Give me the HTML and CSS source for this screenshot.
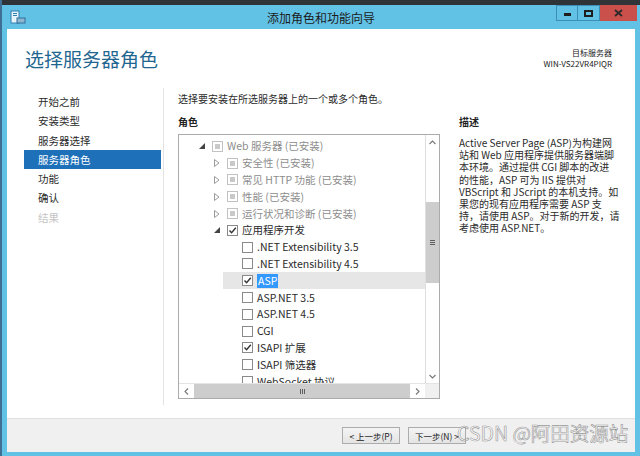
FILE: index.html
```html
<!DOCTYPE html>
<html lang="zh-CN">
<head>
<meta charset="utf-8">
<title>添加角色和功能向导</title>
<link rel="stylesheet" href="styles.css">
</head>
<body>
<div class="desk">
  <div class="window">
    <div class="titlebar">
      <svg class="appicon" width="16" height="16" viewBox="0 0 16 16">
        <rect x="1" y="2" width="8" height="12" fill="#e8f4fb" stroke="#2f7fb0" stroke-width="1"/>
        <rect x="3" y="4" width="4" height="1" fill="#2f7fb0"/>
        <rect x="3" y="6" width="4" height="1" fill="#2f7fb0"/>
        <rect x="7" y="9" width="8" height="5" fill="#8fb6d0" stroke="#2f6f99" stroke-width="1"/>
      </svg>
      <div class="wtitle">添加角色和功能向导</div>
      <div class="capbtns">
        <div class="cb cb-min"><span class="minbar"></span></div>
        <div class="cb cb-max"><span class="maxbox"></span></div>
        <div class="cb cb-close">
          <svg width="9" height="8" viewBox="0 0 9 8"><path d="M1 1 L8 7 M8 1 L1 7" stroke="#2a2a2a" stroke-width="1.8"/></svg>
        </div>
      </div>
    </div>
    <div class="client">
      <header class="head">
        <h1 class="ptitle">选择服务器角色</h1>
        <div class="target">
          <div>目标服务器</div>
          <div>WIN-VS22VR4PIQR</div>
        </div>
      </header>
      <div class="main">
        <nav class="nav">
          <div class="navitem">开始之前</div>
          <div class="navitem">安装类型</div>
          <div class="navitem">服务器选择</div>
          <div class="navitem active">服务器角色</div>
          <div class="navitem">功能</div>
          <div class="navitem">确认</div>
          <div class="navitem disabled">结果</div>
        </nav>
        <section class="content">
          <div class="instr">选择要安装在所选服务器上的一个或多个角色。</div>
          <div class="cols">
            <div class="rolescol">
              <div class="label">角色</div>
              <div class="treebox">
                <div class="treearea">
                  <div class="rows">
                    <div class="row l0 gray"><span class="exp"><svg width="6" height="6" viewBox="0 0 6 6"><path d="M6 0 L6 6 L0 6 Z" fill="#444"/></svg></span><span class="chk ind"></span><span class="txt">Web 服务器 (已安装)</span></div>
                    <div class="row l1 gray"><span class="exp"><svg width="6" height="8" viewBox="0 0 6 8"><path d="M0.5 0.5 L5 4 L0.5 7.5 Z" fill="none" stroke="#9a9a9a"/></svg></span><span class="chk ind"></span><span class="txt">安全性 (已安装)</span></div>
                    <div class="row l1 gray"><span class="exp"><svg width="6" height="8" viewBox="0 0 6 8"><path d="M0.5 0.5 L5 4 L0.5 7.5 Z" fill="none" stroke="#9a9a9a"/></svg></span><span class="chk ind"></span><span class="txt">常见 HTTP 功能 (已安装)</span></div>
                    <div class="row l1 gray"><span class="exp"><svg width="6" height="8" viewBox="0 0 6 8"><path d="M0.5 0.5 L5 4 L0.5 7.5 Z" fill="none" stroke="#9a9a9a"/></svg></span><span class="chk ind"></span><span class="txt">性能 (已安装)</span></div>
                    <div class="row l1 gray"><span class="exp"><svg width="6" height="8" viewBox="0 0 6 8"><path d="M0.5 0.5 L5 4 L0.5 7.5 Z" fill="none" stroke="#9a9a9a"/></svg></span><span class="chk ind"></span><span class="txt">运行状况和诊断 (已安装)</span></div>
                    <div class="row l1"><span class="exp"><svg width="6" height="6" viewBox="0 0 6 6"><path d="M6 0 L6 6 L0 6 Z" fill="#444"/></svg></span><span class="chk on"><svg width="9" height="9" viewBox="0 0 9 9"><path d="M1.5 4.5 L3.6 6.8 L7.8 1.8" fill="none" stroke="#333" stroke-width="1.4"/></svg></span><span class="txt">应用程序开发</span></div>
                    <div class="row l2"><span class="exp"></span><span class="chk"></span><span class="txt">.NET Extensibility 3.5</span></div>
                    <div class="row l2"><span class="exp"></span><span class="chk"></span><span class="txt">.NET Extensibility 4.5</span></div>
                    <div class="row l2 sel"><span class="exp"></span><span class="chk on"><svg width="9" height="9" viewBox="0 0 9 9"><path d="M1.5 4.5 L3.6 6.8 L7.8 1.8" fill="none" stroke="#333" stroke-width="1.4"/></svg></span><span class="txt hl">ASP</span></div>
                    <div class="row l2"><span class="exp"></span><span class="chk"></span><span class="txt">ASP.NET 3.5</span></div>
                    <div class="row l2"><span class="exp"></span><span class="chk"></span><span class="txt">ASP.NET 4.5</span></div>
                    <div class="row l2"><span class="exp"></span><span class="chk"></span><span class="txt">CGI</span></div>
                    <div class="row l2"><span class="exp"></span><span class="chk on"><svg width="9" height="9" viewBox="0 0 9 9"><path d="M1.5 4.5 L3.6 6.8 L7.8 1.8" fill="none" stroke="#333" stroke-width="1.4"/></svg></span><span class="txt">ISAPI 扩展</span></div>
                    <div class="row l2"><span class="exp"></span><span class="chk"></span><span class="txt">ISAPI 筛选器</span></div>
                    <div class="row l2"><span class="exp"></span><span class="chk"></span><span class="txt">WebSocket 协议</span></div>
                  </div>
                  <div class="vscroll">
                    <div class="sbtn"><svg width="7" height="5" viewBox="0 0 7 5"><path d="M0.5 4 L3.5 1 L6.5 4" fill="none" stroke="#777" stroke-width="1.1"/></svg></div>
                    <div class="vtrack">
                      <div class="vthumb"><span class="grip"></span><span class="grip"></span><span class="grip"></span></div>
                    </div>
                    <div class="sbtn"><svg width="7" height="5" viewBox="0 0 7 5"><path d="M0.5 1 L3.5 4 L6.5 1" fill="none" stroke="#777" stroke-width="1.1"/></svg></div>
                  </div>
                </div>
                <div class="hscroll">
                  <div class="hbtn"><svg width="5" height="7" viewBox="0 0 5 7"><path d="M4 0.5 L1 3.5 L4 6.5" fill="none" stroke="#777" stroke-width="1.1"/></svg></div>
                  <div class="hthumb"><span class="hgrip"></span><span class="hgrip"></span><span class="hgrip"></span></div>
                  <div class="hbtn"><svg width="5" height="7" viewBox="0 0 5 7"><path d="M1 0.5 L4 3.5 L1 6.5" fill="none" stroke="#777" stroke-width="1.1"/></svg></div>
                  <div class="corner"></div>
                </div>
              </div>
            </div>
            <div class="desccol">
              <div class="label">描述</div>
              <div class="desc">
                <div class="dl">Active Server Page (ASP)为构建网</div>
                <div class="dl">站和 Web 应用程序提供服务器端脚</div>
                <div class="dl">本环境。通过提供 CGI 脚本的改进</div>
                <div class="dl">的性能，ASP 可为 IIS 提供对</div>
                <div class="dl">VBScript 和 JScript 的本机支持。如</div>
                <div class="dl">果您的现有应用程序需要 ASP 支</div>
                <div class="dl">持，请使用 ASP。对于新的开发，请</div>
                <div class="dl">考虑使用 ASP.NET。</div>
              </div>
            </div>
          </div>
        </section>
      </div>
      <footer class="foot">
        <button class="btn">&lt; 上一步(P)</button>
        <button class="btn">下一步(N) &gt;</button>
        <div class="watermark">CSDN @阿田资源站</div>
      </footer>
    </div>
  </div>
</div>
</body>
</html>
```
FILE: styles.css
```css
* { box-sizing: border-box; }
html, body { margin: 0; padding: 0; }
body {
  width: 640px;
  height: 456px;
  overflow: hidden;
  background: #2f3438;
  font-family: "Noto Sans CJK SC", "Noto Sans", sans-serif;
  color: #1e1e1e;
}
.desk {
  padding: 5px 0 0 2px;
  height: 456px;
  background: linear-gradient(to right, #3f6f95 0, #3f6f95 2px, #2f3438 2px);
}
.window {
  width: 638px;
  height: 451px;
  background: #62c2e6;
  padding: 0 5px 4px 5px;
  display: flex;
  flex-direction: column;
}
.titlebar {
  height: 24px;
  position: relative;
  display: flex;
  align-items: center;
  justify-content: center;
}
.appicon { position: absolute; left: 3px; top: 4px; }
.wtitle {
  font-size: 12px;
  color: #1b1b1b;
  margin-top: 1px;
}
.capbtns {
  position: absolute;
  right: -2px;
  top: 0;
  display: flex;
}
.cb {
  height: 16px;
  display: flex;
  align-items: center;
  justify-content: center;
}
.cb-min { width: 21px; border: 1px solid #3d8fb6; border-right: none; background: #62c2e6; }
.cb-max { width: 23px; border: 1px solid #3d8fb6; background: #62c2e6; }
.cb-close { width: 37px; background: #c9504b; }
.minbar { width: 7px; height: 3px; background: #1d1d1d; margin-top: 3px; }
.maxbox { width: 9px; height: 7px; border: 2px solid #1d1d1d; }

.client {
  flex: 1;
  background: #ffffff;
  display: flex;
  flex-direction: column;
  position: relative;
}
.head {
  height: 59px;
  display: flex;
  justify-content: space-between;
  padding: 0 23px 0 18px;
}
.ptitle {
  margin: 16px 0 0 0;
  font-size: 19px;
  font-weight: normal;
  color: #1f6690;
  line-height: 28px;
}
.target {
  margin-top: 18px;
  text-align: right;
  font-size: 8px;
  line-height: 11px;
  color: #222;
}
.main {
  flex: 1;
  display: flex;
  min-height: 0;
}
.nav {
  width: 157px;
  padding: 4px 0 0 17px;
  border-right: 1px solid #e3e3e3;
  margin-bottom: 13px;
}
.navitem {
  height: 19.3px;
  line-height: 19.3px;
  font-size: 10.5px;
  padding-left: 14px;
  color: #2b2b2b;
  width: 137px;
}
.navitem.active { background: #1e70b9; color: #fff; }
.navitem.disabled { color: #c4c4c4; }
.content {
  flex: 1;
  padding: 4px 0 0 14px;
}
.instr {
  font-size: 10px;
  line-height: 14px;
  color: #2b2b2b;
}
.cols {
  display: flex;
  margin-top: 3px;
}
.rolescol { width: 262px; }
.desccol { padding-left: 19px; }
.label {
  font-size: 10px;
  font-weight: bold;
  line-height: 14px;
  height: 19px;
  margin-top: 6px;
  color: #222;
}
.treebox {
  width: 262px;
  height: 265px;
  border: 1px solid #ababab;
  display: flex;
  flex-direction: column;
}
.treearea {
  flex: 1;
  display: flex;
  min-height: 0;
}
.rows {
  flex: 1;
  padding-top: 3px;
  overflow: hidden;
}
.row {
  height: 16.8px;
  display: flex;
  align-items: center;
  font-size: 10.5px;
  color: #2b2b2b;
  white-space: nowrap;
}
.row.l0 { padding-left: 13px; }
.row.l1 { padding-left: 28px; }
.row.l2 { padding-left: 46px; }
.row.l0 .exp, .row.l1 .exp { width: 20px; }
.row.gray { color: #8d8d8d; }
.row.sel { background: #e6e6e6; margin-left: 44px; padding-left: 2px; }
.exp {
  width: 17px;
  display: flex;
  align-items: center;
  justify-content: center;
}
.chk {
  width: 11px;
  height: 11px;
  border: 1px solid #8a8a8a;
  background: #fff;
  margin-right: 4px;
  display: flex;
  align-items: center;
  justify-content: center;
}
.chk.ind { border-color: #c2c2c2; }
.chk.ind::after {
  content: "";
  width: 5px;
  height: 5px;
  background: #c9c9c9;
}
.txt { line-height: 14px; }
.txt.hl { background: #3399ff; color: #fff; padding: 0 1px; }

.vscroll {
  width: 14px;
  border-left: 1px solid #dedede;
  display: flex;
  flex-direction: column;
}
.sbtn {
  height: 14px;
  display: flex;
  align-items: center;
  justify-content: center;
}
.vtrack {
  flex: 1;
  padding-top: 53px;
}
.vthumb {
  height: 81px;
  background: #cdcdcd;
  display: flex;
  flex-direction: column;
  align-items: center;
  justify-content: center;
  gap: 1px;
}
.grip { width: 5px; height: 1px; background: #5f5f5f; }
.hscroll {
  height: 15px;
  display: flex;
  border-top: 1px solid #e4e4e4;
}
.hbtn {
  width: 15px;
  display: flex;
  align-items: center;
  justify-content: center;
}
.hthumb {
  flex: 1;
  background: #cdcdcd;
  display: flex;
  align-items: center;
  justify-content: center;
  gap: 1px;
}
.hgrip { width: 1px; height: 5px; background: #5f5f5f; }
.corner { width: 14px; background: #f0f0f0; }

.desc {
  font-size: 10px;
  color: #2b2b2b;
  white-space: nowrap;
  margin-top: 3px;
}
.dl { height: 12.2px; line-height: 12.2px; }

.foot {
  height: 34px;
  background: #f0f0f0;
  border-top: 1px solid #e0e0e0;
  display: flex;
  align-items: flex-start;
  padding: 8px 0 0 335px;
  gap: 8px;
  position: relative;
}
.btn {
  height: 17px;
  padding: 0 5px;
  font-family: "Noto Sans CJK SC", sans-serif;
  font-size: 8.5px;
  color: #222;
  background: linear-gradient(#f4f4f4, #e4e4e4);
  border: 1px solid #acacac;
  width: 58px;
  line-height: 14px;
}
.watermark {
  position: absolute;
  left: 450px;
  top: 1px;
  font-family: "Noto Sans CJK SC", "Liberation Sans", sans-serif;
  font-size: 19.5px;
  line-height: 26px;
  color: rgba(255, 255, 255, 0.55);
  -webkit-text-stroke: 0.6px rgba(110, 110, 110, 0.7);
  white-space: nowrap;
}
```
